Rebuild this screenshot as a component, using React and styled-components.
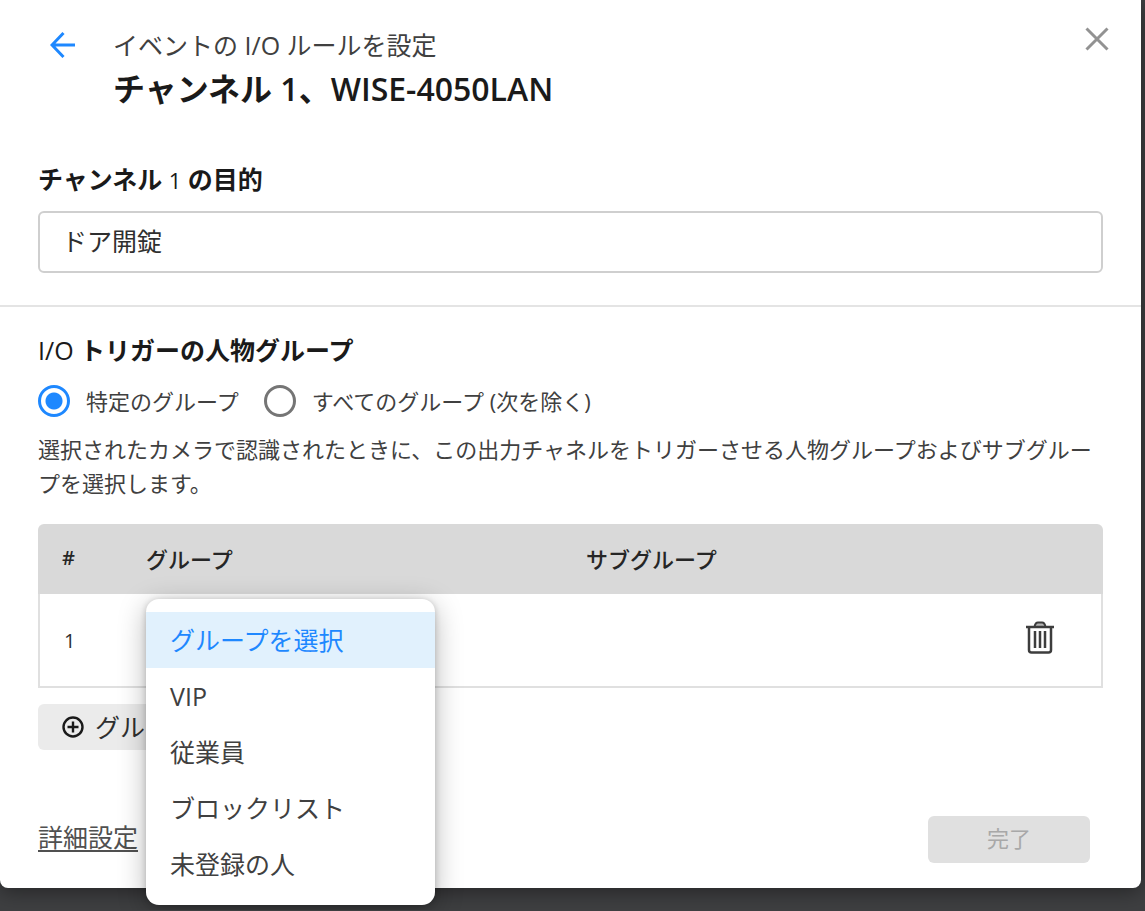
import { useState } from "react";
import styled, { createGlobalStyle } from "styled-components";

const GlobalStyle = createGlobalStyle`
  * {
    box-sizing: border-box;
  }
  body {
    margin: 0;
    background-color: #3e3f41;
    color: #2f2f2f;
    font-family: "Open Sans", "Noto Sans CJK JP", sans-serif;
    font-size: 22px;
  }
  button,
  input,
  select {
    font-family: inherit;
    color: inherit;
  }
`;
const Dialog = styled.main`
  margin-right: 4px;
  margin-bottom: 22px;
  padding-bottom: 25px;
  border-radius: 0 0 8px 8px;
  background-color: #ffffff;
  box-shadow: 0 4px 20px rgba(0, 0, 0, 0.4);
`;
const Header = styled.header`
  display: flex;
  align-items: flex-start;
  padding: 23px 32px 0 50px;
`;
const IconBtn = styled.button`
  display: flex;
  padding: 0;
  border: none;
  background: none;
  cursor: pointer;
`;
const BackBtn = styled(IconBtn)`
  margin-top: 8px;
`;
const CloseBtn = styled(IconBtn)`
  margin-top: 4px;
`;
const Titles = styled.div`
  flex: 1;
  margin-left: 37px;
`;
const SubTitle = styled.p`
  margin: 0;
  font-size: 25px;
  line-height: 44px;
  color: #404040;
`;
const Title = styled.h1`
  margin: 0;
  font-size: 32px;
  font-weight: 600;
  line-height: 44px;
  color: #1a1a1a;
`;
const Section = styled.section`
  padding: ${(props) => props.$pad};
  border-bottom: ${(props) => (props.$line ? "2px solid #e4e4e4" : "none")};
`;
const FieldLabel = styled.label`
  display: block;
  margin-bottom: 13px;
  font-size: 25px;
  font-weight: 600;
  line-height: 36px;
  color: #1a1a1a;
`;
const SectionTitle = styled.h2`
  margin: 0;
  font-size: 25px;
  font-weight: 600;
  line-height: 36px;
  color: #1a1a1a;
`;
const Latin = styled.span`
  font-size: ${(props) => props.$size || "25px"};
  font-weight: 400;
`;
const TextInput = styled.input`
  display: block;
  width: 100%;
  height: 62px;
  padding: 0 22px 5px;
  border: 2px solid #cfcfcf;
  border-radius: 6px;
  background-color: #ffffff;
  font-size: 25px;
  outline: none;
`;
const RadioRow = styled.div`
  display: flex;
  align-items: center;
  gap: 25px;
  margin-top: 15px;
`;
const RadioLabel = styled.label`
  display: flex;
  align-items: center;
  gap: 16px;
  line-height: 36px;
  color: #404040;
`;
const Radio = styled.input`
  appearance: none;
  width: 32px;
  height: 32px;
  margin: 0;
  border: 3px solid #757575;
  border-radius: 50%;

  &:checked {
    border-color: #1e88ff;
    background: radial-gradient(circle, #1e88ff 8px, #ffffff 9px);
  }
`;
const Description = styled.p`
  margin: 13px 0 24px;
  line-height: 34px;
  color: #404040;
`;
const Table = styled.table`
  width: 100%;
  border-spacing: 0;
  table-layout: fixed;
`;
const Th = styled.th`
  width: ${(props) => props.$width || "auto"};
  height: 70px;
  padding: 0 24px 3px;
  background-color: #d9d9d9;
  font-weight: ${(props) => props.$weight || 500};
  font-size: ${(props) => props.$size || "22px"};
  text-align: left;
  color: #262626;

  &:first-child {
    border-top-left-radius: 6px;
  }
  &:last-child {
    border-top-right-radius: 6px;
  }
`;
const Td = styled.td`
  height: 94px;
  padding: 0 24px;
  border-bottom: 2px solid #e0e0e0;
  font-size: 20px;

  &:first-child {
    border-left: 2px solid #e0e0e0;
  }
  &:last-child {
    border-right: 2px solid #e0e0e0;
  }
`;
const DeleteBtn = styled(IconBtn)`
  margin: 0 23px 6px auto;
`;
const SelectBox = styled.div`
  position: relative;
  width: 289px;
`;
const Select = styled.select`
  display: block;
  appearance: none;
  width: 100%;
  height: 62px;
  padding: 0 24px;
  border: 2px solid #1e88ff;
  border-radius: 6px;
  background-color: #ffffff;
  font-size: 25px;
`;
const Menu = styled.div`
  position: absolute;
  z-index: 2;
  top: -10px;
  left: 0;
  width: 100%;
  padding: 13px 0;
  border-radius: 13px;
  background-color: #ffffff;
  box-shadow: 0 6px 28px rgba(0, 0, 0, 0.28), 0 1px 6px rgba(0, 0, 0, 0.2);
`;
const MenuItem = styled.button`
  display: block;
  width: 100%;
  height: 56px;
  padding: 0 24px;
  border: none;
  background-color: ${(props) => (props.$active ? "#e1f1fd" : "#ffffff")};
  color: ${(props) => (props.$active ? "#1e88ff" : "#404040")};
  font-size: 25px;
  line-height: 54px;
  text-align: left;
  cursor: pointer;
`;
const AddBtn = styled.button`
  display: flex;
  align-items: center;
  gap: 11px;
  height: 46px;
  margin-top: 16px;
  padding: 0 24px;
  border: none;
  border-radius: 6px;
  background-color: #ebebeb;
  font-size: 25px;
  line-height: 44px;
`;
const Footer = styled.footer`
  display: flex;
  align-items: center;
  justify-content: space-between;
  margin-top: 66px;
  padding: 0 51px 0 38px;
`;
const DetailLink = styled.a`
  padding-bottom: 4px;
  color: #505050;
  font-size: 25px;
  line-height: 43px;
  text-underline-offset: 3px;
`;
const DoneBtn = styled.button`
  width: 162px;
  height: 47px;
  padding: 0 0 5px;
  border: none;
  border-radius: 6px;
  background-color: #e0e0e0;
  font-size: 22px;

  &:disabled {
    color: #a8a8a8;
  }
`;

const BackIcon = () => (
  <svg width="26" height="28" viewBox="0 0 26 28" fill="none" stroke="#1e88ff" strokeWidth="3">
    <path d="M13.5 2 2 14l11.5 12M2 14H25" />
  </svg>
);
const CloseIcon = () => (
  <svg width="24" height="24" viewBox="0 0 24 24" fill="none" stroke="#929292" strokeWidth="3">
    <path d="M1.5 1.5 22.5 22.5M22.5 1.5 1.5 22.5" />
  </svg>
);
const TrashIcon = () => (
  <svg width="28" height="33" viewBox="0 0 28 33" fill="none" stroke="#3d3d3d" strokeWidth="2">
    <path d="M8.5 6C9 3 10.5 1.5 12 1.5h4c1.5 0 3 1.5 3.5 4.500z" fill="#b5b5b5" />
    <path d="M0 6h28" strokeWidth="2.5" />
    <path d="M3 6v23q0 2.500 2.500 2.500h17q2.500 0 2.500-2.500V6" strokeWidth="2.5" />
    <path d="M9 10v17M14 10v17M19 10v17" strokeWidth="2.5" />
  </svg>
);
const PlusIcon = () => (
  <svg width="22" height="22" viewBox="0 0 22 22" fill="none" stroke="#1a1a1a" strokeWidth="2.4">
    <circle cx="11" cy="11" r="9.5" />
    <path d="M11 5.500v11M5.500 11h11" />
  </svg>
);

const groups = ["グループを選択", "VIP", "従業員", "ブロックリスト", "未登録の人"];

const App = () => {
  const [purpose, setPurpose] = useState("ドア開錠");
  const [target, setTarget] = useState("specific");
  const [group, setGroup] = useState(groups[0]);

  return (
    <>
      <GlobalStyle />
      <Dialog>
        <Header>
          <BackBtn type="button" aria-label="戻る">
            <BackIcon />
          </BackBtn>
          <Titles>
            <SubTitle>イベントの I/O ルールを設定</SubTitle>
            <Title>チャンネル 1、WISE-4050LAN</Title>
          </Titles>
          <CloseBtn type="button" aria-label="閉じる">
            <CloseIcon />
          </CloseBtn>
        </Header>
        <Section $pad="50px 38px 32px" $line>
          <FieldLabel htmlFor="purpose">
            チャンネル <Latin $size="22px">1</Latin> の目的
          </FieldLabel>
          <TextInput
            id="purpose"
            value={purpose}
            onChange={(e) => setPurpose(e.target.value)}
          />
        </Section>
        <Section $pad="25px 38px 0">
          <SectionTitle>
            <Latin>I/O</Latin> トリガーの人物グループ
          </SectionTitle>
          <RadioRow>
            <RadioLabel>
              <Radio
                type="radio"
                name="target"
                checked={target === "specific"}
                onChange={() => setTarget("specific")}
              />
              特定のグループ
            </RadioLabel>
            <RadioLabel>
              <Radio
                type="radio"
                name="target"
                checked={target === "all"}
                onChange={() => setTarget("all")}
              />
              すべてのグループ (次を除く)
            </RadioLabel>
          </RadioRow>
          <Description>
            選択されたカメラで認識されたときに、この出力チャネルをトリガーさせる人物グループおよびサブグループを選択します。
          </Description>
          <Table>
            <thead>
              <tr>
                <Th $width="84px" $size="20px" $weight={600}>#</Th>
                <Th $width="440px">グループ</Th>
                <Th>サブグループ</Th>
                <Th $width="120px" aria-label="操作" />
              </tr>
            </thead>
            <tbody>
              <tr>
                <Td>1</Td>
                <Td>
                  <SelectBox>
                    <Select
                      aria-label="グループ"
                      value={group}
                      onChange={(e) => setGroup(e.target.value)}
                    >
                      {groups.map((name) => (
                        <option key={name}>{name}</option>
                      ))}
                    </Select>
                    <Menu role="listbox" aria-label="グループ">
                      {groups.map((name) => (
                        <MenuItem
                          key={name}
                          type="button"
                          role="option"
                          aria-selected={name === group}
                          $active={name === group}
                          onClick={() => setGroup(name)}
                        >
                          {name}
                        </MenuItem>
                      ))}
                    </Menu>
                  </SelectBox>
                </Td>
                <Td />
                <Td>
                  <DeleteBtn type="button" aria-label="削除">
                    <TrashIcon />
                  </DeleteBtn>
                </Td>
              </tr>
            </tbody>
          </Table>
          <AddBtn type="button">
            <PlusIcon />
            グループ
          </AddBtn>
        </Section>
        <Footer>
          <DetailLink href="#advanced">詳細設定</DetailLink>
          <DoneBtn type="button" disabled>
            完了
          </DoneBtn>
        </Footer>
      </Dialog>
    </>
  );
};
export default App;
